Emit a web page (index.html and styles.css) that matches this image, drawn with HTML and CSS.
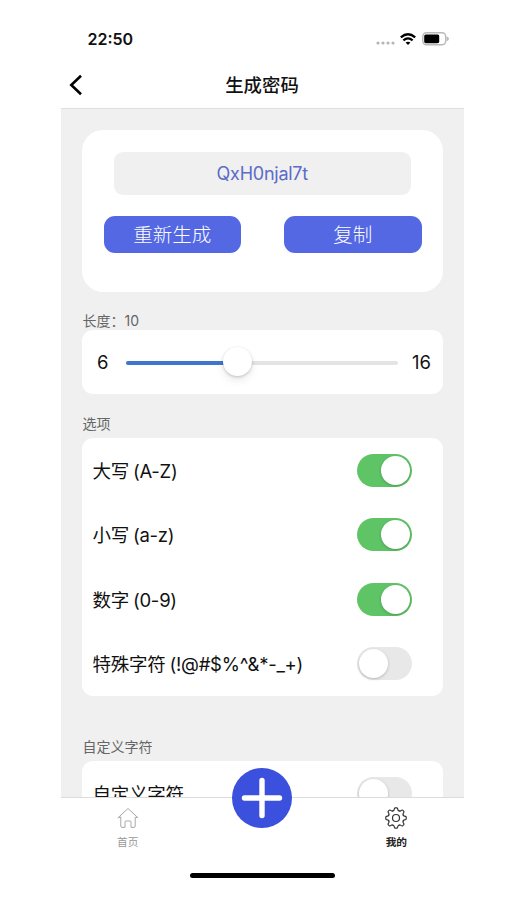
FILE: index.html
```html
<!DOCTYPE html>
<html lang="zh-CN">

<head>
    <meta charset="UTF-8">
    <meta name="viewport" content="width=device-width, initial-scale=1.0">
    <title>生成密码</title>
    <link rel="stylesheet" href="styles.css">
</head>

<body>
    <div class="phone">
        <div class="status-bar">
            <span class="time">22:50</span>
            <div class="status-icons">
                <svg class="signal" width="19" height="4" viewBox="0 0 19 4" fill="#b5b5b5">
                    <circle cx="2" cy="2" r="1.6" />
                    <circle cx="7" cy="2" r="1.6" />
                    <circle cx="12" cy="2" r="1.6" />
                    <circle cx="17" cy="2" r="1.6" />
                </svg>
                <svg class="wifi" width="16" height="12" viewBox="0 0 16 12" fill="none" stroke="#000" stroke-width="2.3">
                    <path d="M0.8 4.3 Q8 -1.9 15.2 4.3" />
                    <path d="M3.4 7.4 Q8 3.4 12.6 7.4" />
                    <path d="M8 11.9 L5.6 9.6 Q8 7.8 10.4 9.6 Z" fill="#000" stroke="none" />
                </svg>
                <svg class="battery" width="27" height="14" viewBox="0 0 27 14">
                    <rect x="0.8" y="0.8" width="22.9" height="11.9" rx="3.6" fill="#fff" stroke="#b9b9b9" stroke-width="1.4" />
                    <path d="M24.6 4.3 Q27 5.3 27 6.8 Q27 8.3 24.6 9.3 Z" fill="#b9b9b9" />
                    <rect x="2.2" y="2.5" width="15" height="8.7" rx="1.6" fill="#000" />
                </svg>
            </div>
        </div>

        <div class="nav-bar">
            <svg class="back" width="14" height="22" viewBox="0 0 14 22" fill="none" stroke="#000" stroke-width="2.6">
                <path d="M12 1.8 L2.3 11 L12 20.2" />
            </svg>
            <h1>生成密码</h1>
        </div>

        <main class="content">
            <div class="card result">
                <div class="password" id="password">QxH0njal7t</div>
                <div class="buttons">
                    <button>重新生成</button>
                    <button>复制</button>
                </div>
            </div>

            <p class="label length-label">长度：10</p>
            <div class="card slider">
                <span class="min">6</span>
                <div class="track">
                    <div class="fill" style="width: 41%"></div>
                    <div class="thumb"></div>
                </div>
                <span class="max">16</span>
            </div>

            <p class="label options-label">选项</p>
            <div class="card options">
                <div class="row"><span>大写 (A-Z)</span><div class="switch on"></div></div>
                <div class="row"><span>小写 (a-z)</span><div class="switch on"></div></div>
                <div class="row"><span>数字 (0-9)</span><div class="switch on"></div></div>
                <div class="row"><span>特殊字符 (!@#$%^&amp;*-_+)</span><div class="switch"></div></div>
            </div>

            <p class="label custom-label">自定义字符</p>
            <div class="card options">
                <div class="row"><span>自定义字符</span><div class="switch"></div></div>
            </div>
        </main>

        <nav class="tab-bar">
            <div class="tab">
                <svg width="22" height="22" viewBox="0 0 22 22" fill="none" stroke="#a8a8a8" stroke-width="1" stroke-linejoin="round" stroke-linecap="round">
                    <path d="M1.2 10.6 L11 1.5 L20.8 10.6 L18.2 10.3 V19.2 Q18.2 20.4 17 20.4 H14 V14.8 Q14 14 13.2 14 H8.8 Q8 14 8 14.8 V20.4 H5 Q3.8 20.4 3.8 19.2 V10.3 Z" />
                </svg>
                <span>首页</span>
            </div>
            <div class="tab">
                <div class="add">
                    <svg width="60" height="60" viewBox="0 0 60 60" stroke="#fff" stroke-width="5.4" stroke-linecap="round">
                        <path d="M12.5 30 H47.5 M30 12.5 V47.5" />
                    </svg>
                </div>
            </div>
            <div class="tab active">
                <svg width="22" height="22" viewBox="-11 -11 22 22" fill="none" stroke="#333" stroke-width="1.2" stroke-linecap="round">
                    <defs>
                        <path id="tooth" d="M-3 -7.25 Q-2 -7.2 -1.8 -8.6 Q-1.6 -10.2 -0.9 -10.2 H0.9 Q1.6 -10.2 1.8 -8.6 Q2 -7.2 3 -7.25" />
                    </defs>
                    <use href="#tooth" />
                    <use href="#tooth" transform="rotate(45)" />
                    <use href="#tooth" transform="rotate(90)" />
                    <use href="#tooth" transform="rotate(135)" />
                    <use href="#tooth" transform="rotate(180)" />
                    <use href="#tooth" transform="rotate(225)" />
                    <use href="#tooth" transform="rotate(270)" />
                    <use href="#tooth" transform="rotate(315)" />
                    <circle r="3.5" />
                </svg>
                <span>我的</span>
            </div>
        </nav>
        <div class="home-indicator"></div>
    </div>
</body>

</html>
```

FILE: styles.css
```css
* {
    box-sizing: border-box;
}

body {
    margin: 0;
    background-color: #fff;
    color: #111;
    font-family: Inter, "Noto Sans CJK SC", sans-serif;
}

.phone {
    width: 403px;
    height: 900px;
    margin-left: 60.5px;
    display: flex;
    flex-direction: column;
    overflow: hidden;
}

.status-bar {
    height: 62px;
    flex: none;
    display: flex;
    justify-content: space-between;
    align-items: center;
    padding: 16px 15px 0 27px;
}

.time {
    font-size: 16px;
    font-weight: 600;
}

.status-icons {
    display: flex;
    align-items: center;
}

.signal {
    margin: 8px 5px 0 0;
}

.wifi {
    margin-right: 6px;
}

.nav-bar {
    height: 47px;
    flex: none;
    display: flex;
    align-items: center;
    padding-left: 8px;
    border-bottom: 1px solid #dfdfdf;
}

h1 {
    flex: 1;
    margin: 0 22px 0 0;
    font-size: 18.4px;
    font-weight: 500;
    line-height: 26px;
    text-align: center;
}

.content {
    flex: 1;
    min-height: 0;
    overflow: hidden;
    padding: 21px 21px 0;
    background-color: #f0f0f0;
}

.card {
    background-color: #fff;
    border-radius: 11px;
}

.result {
    height: 162px;
    padding: 22px 21px 0 22px;
    border-radius: 21px;
}

.password {
    height: 43px;
    margin: 0 11px 0 10.5px;
    border-radius: 9px;
    background-color: #f0f0f0;
    color: #5b6bc8;
    font-size: 18px;
    letter-spacing: -0.25px;
    line-height: 43px;
    text-align: center;
}

.buttons {
    display: flex;
    justify-content: space-between;
    margin-top: 21px;
}

button {
    width: 137.5px;
    height: 37px;
    padding: 1px 0 0;
    border: none;
    border-radius: 11px;
    background-color: #5468e4;
    color: #fff;
    font-family: inherit;
    font-size: 19.5px;
    font-weight: 300;
    line-height: 37px;
    cursor: pointer;
}

.label {
    margin: 0;
    padding-left: 1px;
    color: #666;
    font-size: 14px;
    line-height: 20px;
}

.length-label {
    margin-top: 19px;
    margin-bottom: -1px;
}

.options-label {
    margin-top: 20px;
    margin-bottom: 4px;
}

.custom-label {
    margin-top: 41px;
    margin-bottom: 4px;
}

.slider {
    height: 64px;
    display: flex;
    align-items: center;
    justify-content: space-between;
    padding: 0 11.5px 0 15.5px;
    font-size: 18.5px;
}

.track {
    position: relative;
    width: 272px;
    height: 4px;
    margin: 2px 0 0 4px;
    border-radius: 2px;
    background-color: #e4e4e4;
}

.fill {
    height: 100%;
    border-radius: 2px;
    background-color: #3f76cd;
}

.thumb {
    position: absolute;
    left: 41%;
    top: 50%;
    width: 29px;
    height: 29px;
    margin: -16px 0 0 -14.5px;
    border-radius: 50%;
    background-color: #fff;
    box-shadow: 0 1px 3px rgba(0, 0, 0, 0.2), 0 5px 9px rgba(0, 0, 0, 0.08);
}

.row {
    height: 64.5px;
    display: flex;
    align-items: center;
    justify-content: space-between;
    padding: 0 31px 0 11px;
    font-size: 18.5px;
    letter-spacing: -0.25px;
    word-spacing: -1px;
    white-space: nowrap;
}

.row span {
    margin-top: -1px;
}

.switch {
    width: 55px;
    height: 33px;
    padding: 2px;
    display: flex;
    border-radius: 17px;
    background-color: #e8e8e8;
}

.switch::after {
    content: '';
    width: 29px;
    height: 29px;
    border-radius: 50%;
    background-color: #fff;
    box-shadow: 0 1px 3px rgba(0, 0, 0, 0.22);
}

.switch.on {
    justify-content: flex-end;
    background-color: #5fc466;
}

.tab-bar {
    height: 103px;
    flex: none;
    display: flex;
    border-top: 1px solid #dcdcdc;
    background-color: #fff;
}

.tab {
    position: relative;
    flex: 1;
    display: flex;
    flex-direction: column;
    align-items: center;
    padding-top: 9px;
    color: #999;
    font-size: 10.7px;
    line-height: 16px;
}

.tab span {
    margin-top: 6px;
}

.active {
    color: #222;
    font-weight: 600;
}

/* floats above the top edge of the tab bar */
.add {
    position: absolute;
    top: -30.5px;
    width: 60px;
    height: 60px;
    border-radius: 50%;
    background-color: #3b50dc;
}

.add svg {
    display: block;
}

.home-indicator {
    position: absolute;
    left: 190px;
    top: 873px;
    width: 145px;
    height: 5px;
    border-radius: 3px;
    background-color: #000;
}
```
